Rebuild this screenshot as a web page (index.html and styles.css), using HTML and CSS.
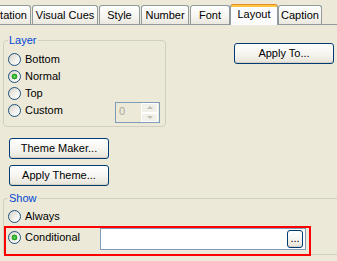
FILE: index.html
```html
<!DOCTYPE html>
<html>
<head>
<meta charset="utf-8">
<link rel="stylesheet" href="styles.css">
</head>
<body>
<div class="tabs">
  <div class="tab t-orient">tation</div>
  <div class="tab t-visual">Visual Cues</div>
  <div class="tab t-style">Style</div>
  <div class="tab t-number">Number</div>
  <div class="tab t-font">Font</div>
  <div class="tab tab-active t-layout">Layout</div>
  <div class="tab t-caption">Caption</div>
</div>
<div class="pane">
  <div class="top-row">
    <fieldset class="group group-layer">
      <legend>Layer</legend>
      <div class="radio-row"><span class="radio"></span><span>Bottom</span></div>
      <div class="radio-row"><span class="radio checked"></span><span>Normal</span></div>
      <div class="radio-row"><span class="radio"></span><span>Top</span></div>
      <div class="radio-row custom-row">
        <div class="radio-item"><span class="radio"></span><span>Custom</span></div>
        <div class="spin">
          <span class="spin-value">0</span>
          <div class="spin-btns">
            <div class="spin-btn"><span class="arrow-up"></span></div>
            <div class="spin-btn"><span class="arrow-down"></span></div>
          </div>
        </div>
      </div>
    </fieldset>
    <div class="btn btn-apply-to">Apply To...</div>
  </div>
  <div class="btn btn-theme btn-theme-maker">Theme Maker...</div>
  <div class="btn btn-theme btn-apply-theme">Apply Theme...</div>
  <fieldset class="group group-show">
    <legend>Show</legend>
    <div class="radio-row"><span class="radio"></span><span>Always</span></div>
    <div class="cond-row">
      <div class="radio-item cond-item"><span class="radio checked"></span><span>Conditional</span></div>
      <div class="cond-input">
        <div class="btn btn-dots">...</div>
      </div>
    </div>
  </fieldset>
</div>
</body>
</html>
```
FILE: styles.css
```css
* { box-sizing: border-box; }
html, body { margin: 0; padding: 0; }
body {
  width: 337px;
  height: 261px;
  overflow: hidden;
  background: #ECE9D8;
  font: 11px/13px "Liberation Sans", Arial, sans-serif;
  color: #000;
}

/* Tabs */
.tabs {
  display: flex;
  align-items: flex-end;
  gap: 1px;
  height: 25px;
  border-bottom: 1px solid #919B9C;
}
.tab {
  flex: none;
  height: 19px;
  border: 1px solid #919B9C;
  border-bottom: 0;
  border-radius: 3px 3px 0 0;
  background: linear-gradient(#FFFFFF, #F4F3EE 65%, #E9E7DE);
  padding-top: 3px;
  text-align: center;
  white-space: nowrap;
}
.t-orient {
  width: 31px;
  border-left: 0;
  border-radius: 0 3px 0 0;
  text-align: right;
  padding-right: 3px;
}
.t-visual { width: 66px; }
.t-style { width: 41px; }
.t-number { width: 48px; }
.t-font { width: 40px; }
.t-layout { width: 48px; }
.t-caption { width: 44px; }
.tab-active {
  height: 21px;
  margin: 0 -1px -1px -1px;
  border-top-color: #E68B2C;
  background: linear-gradient(#FFC73C 0, #FFC73C 2px, #FCFCFE 2px);
  padding-top: 3px;
}

/* Pane */
.pane {
  padding: 0 3px;
}
.top-row {
  display: flex;
  justify-content: space-between;
  align-items: flex-start;
}

/* Group boxes */
.group {
  margin: 0;
  min-width: 0;
  border: 1px solid #D0D0BF;
  border-radius: 4px;
}
.group legend {
  padding: 0 1px;
  color: #0046D5;
  line-height: 13px;
}
.group-layer {
  width: 163px;
  margin-top: 9px;
  padding: 4px 5px 7px 4px;
}
.group-show {
  margin: 6px -3px 0 0;
  padding: 3px 0 0 4px;
  border-right: 0;
  border-radius: 4px 0 0 4px;
}

/* Radios */
.radio-row, .radio-item {
  display: flex;
  align-items: center;
  height: 17px;
}
.radio {
  flex: none;
  width: 13px;
  height: 13px;
  margin-right: 4px;
  border: 1px solid #1C5180;
  border-radius: 50%;
  background: linear-gradient(135deg, #D6D1C4 0%, #F2F1EC 55%, #FFFFFF 100%);
}
.radio.checked {
  background:
    radial-gradient(circle at 50% 50%, #7EE07E 0, #2DB52D 1.5px, #1F9A1F 2.6px, rgba(31,154,31,0) 3.2px),
    linear-gradient(135deg, #D6D1C4 0%, #F2F1EC 55%, #FFFFFF 100%);
}
.custom-row {
  justify-content: space-between;
  align-items: flex-start;
}

/* Spin box */
.spin {
  display: flex;
  width: 45px;
  height: 21px;
  margin-bottom: -4px;
  border: 1px solid #7F9DB9;
  background: #ECE9D8;
}
.spin-value {
  padding: 2px 0 0 3px;
  color: #ACA899;
}
.spin-btns {
  display: flex;
  flex-direction: column;
  width: 17px;
  margin-left: auto;
  margin-right: 1px;
}
.spin-btn {
  flex: 1;
  display: flex;
  align-items: center;
  justify-content: center;
  border: 1px solid #FFFFFF;
  background: #F1F0E9;
}
.arrow-up, .arrow-down {
  width: 0;
  height: 0;
  border-left: 3px solid transparent;
  border-right: 3px solid transparent;
}
.arrow-up { border-bottom: 3px solid #C2BFB0; }
.arrow-down { border-top: 3px solid #C2BFB0; }

/* Buttons */
.btn {
  display: flex;
  align-items: center;
  justify-content: center;
  height: 21px;
  border: 1px solid #003C74;
  border-radius: 3px;
  background: linear-gradient(#FFFFFF, #F5F4EF 55%, #E6E3D8);
  box-shadow: inset 0 -1px 0 #D6D0C5;
  white-space: nowrap;
}
.btn-apply-to {
  width: 100px;
  margin-top: 18px;
}
.btn-theme {
  width: 100px;
  margin-left: 6px;
}
.btn-theme-maker { margin-top: 11px; }
.btn-apply-theme { margin-top: 6px; }

/* Conditional row */
.cond-row {
  display: flex;
  align-items: flex-start;
  width: 307px;
  margin: 1px 0 -2px -4px;
  padding: 0 3px 4px 2px;
  border: 2px solid #FF0000;
}
.cond-item {
  width: 92px;
  margin-top: 1px;
}
.cond-input {
  flex: 1;
  display: flex;
  align-items: center;
  justify-content: flex-end;
  height: 22px;
  padding-right: 2px;
  border: 1px solid #7F9DB9;
  background: #FFFFFF;
}
.btn-dots {
  width: 16px;
  height: 18px;
  padding-bottom: 2px;
}
```
